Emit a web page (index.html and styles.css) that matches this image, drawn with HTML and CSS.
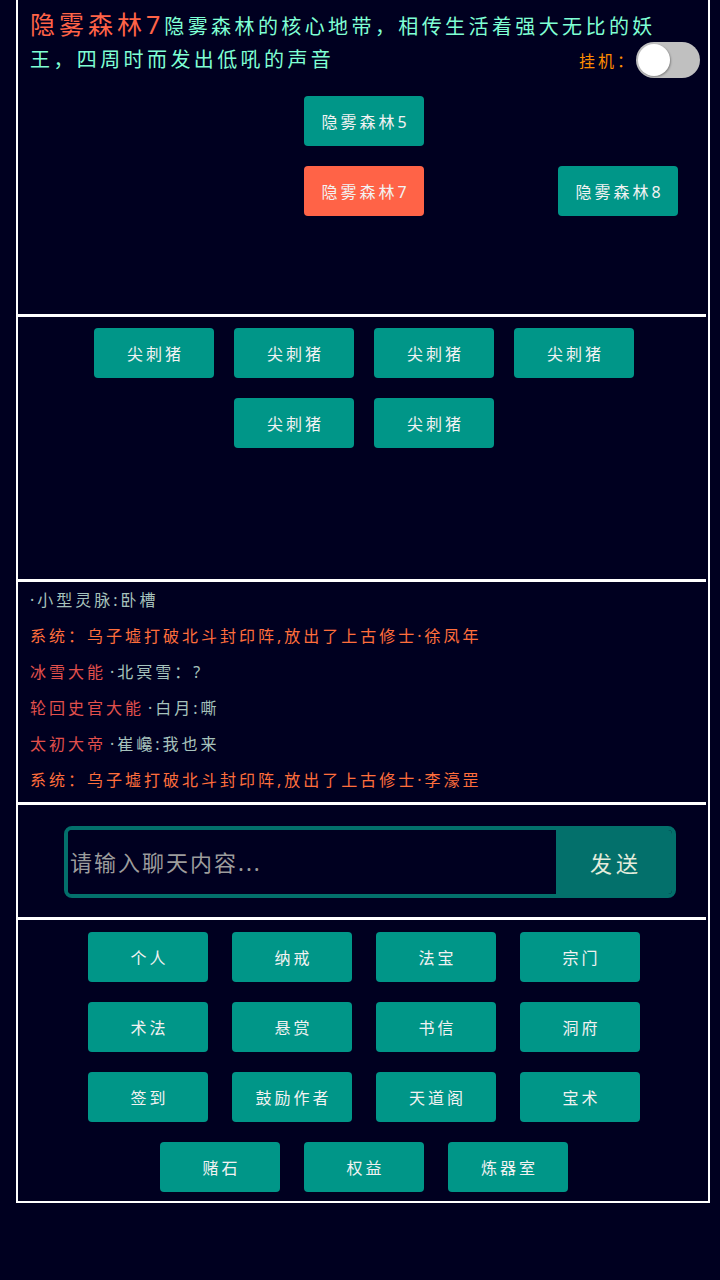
FILE: index.html
```html
<!DOCTYPE html>
<html lang="zh-CN">
<head>
    <meta charset="UTF-8">
    <meta name="viewport" content="width=device-width, initial-scale=1.0">
    <title>隐雾森林7</title>
    <link rel="stylesheet" href="styles.css">
</head>
<body>
    <div class="game">
        <section class="panel scene">
            <div class="scene-title"><span class="scene-name">隐雾森林7</span><span class="scene-desc">隐雾森林的核心地带，相传生活着强大无比的妖王，四周时而发出低吼的声音</span></div>
            <div class="idle">
                <span class="idle-label">挂机：</span>
                <label class="switch">
                    <input type="checkbox">
                    <span class="knob"></span>
                </label>
            </div>
            <div class="map">
                <button class="btn room" style="grid-area: 1 / 2">隐雾森林5</button>
                <button class="btn room current" style="grid-area: 2 / 2">隐雾森林7</button>
                <button class="btn room" style="grid-area: 2 / 3">隐雾森林8</button>
            </div>
        </section>

        <section class="panel monsters">
            <div class="btn-list monster-list">
                <button class="btn">尖刺猪</button>
                <button class="btn">尖刺猪</button>
                <button class="btn">尖刺猪</button>
                <button class="btn">尖刺猪</button>
                <button class="btn">尖刺猪</button>
                <button class="btn">尖刺猪</button>
            </div>
        </section>

        <section class="panel chat">
            <div class="msg"><span class="msg-name"></span><span class="msg-text">·小型灵脉:卧槽</span></div>
            <div class="msg system">系统：乌子墟打破北斗封印阵,放出了上古修士·徐凤年</div>
            <div class="msg"><span class="msg-name">冰雪大能</span><span class="msg-text">·北冥雪：?</span></div>
            <div class="msg"><span class="msg-name">轮回史官大能</span><span class="msg-text">·白月:嘶</span></div>
            <div class="msg"><span class="msg-name">太初大帝</span><span class="msg-text">·崔巉:我也来</span></div>
            <div class="msg system">系统：乌子墟打破北斗封印阵,放出了上古修士·李濠罡</div>
        </section>

        <section class="panel send-panel">
            <div class="send-box">
                <input class="send-input" type="text" placeholder="请输入聊天内容...">
                <button class="send-button">发送</button>
            </div>
        </section>

        <section class="panel menu">
            <div class="btn-list menu-list">
                <button class="btn">个人</button>
                <button class="btn">纳戒</button>
                <button class="btn">法宝</button>
                <button class="btn">宗门</button>
                <button class="btn">术法</button>
                <button class="btn">悬赏</button>
                <button class="btn">书信</button>
                <button class="btn">洞府</button>
                <button class="btn">签到</button>
                <button class="btn">鼓励作者</button>
                <button class="btn">天道阁</button>
                <button class="btn">宝术</button>
                <button class="btn">赌石</button>
                <button class="btn">权益</button>
                <button class="btn">炼器室</button>
            </div>
        </section>
    </div>
</body>
</html>
```

FILE: styles.css
```css
body {
    margin: 0;
    background-color: #000020;
    font-family: "Noto Sans", "Noto Sans CJK SC", sans-serif;
}
.game {
    margin-left: 16px;
    width: 694px;
    box-sizing: border-box;
    border-left: 2px solid #fff;
    border-right: 2px solid #fff;
    border-bottom: 2px solid #fff;
}
.panel {
    border-bottom: 3px solid #fff;
    margin-right: 2px;
    box-sizing: border-box;
}
.panel:last-child {
    border-bottom: none;
}

/* scene */
.scene {
    position: relative;
    height: 317px;
    padding: 8px 0 0 12px;
}
.scene-title {
    width: 636px;
    font-size: 20px;
    line-height: 33px;
}
.scene-name {
    font-size: 25px;
    letter-spacing: 4px;
    color: #ff6347;
}
.scene-desc {
    letter-spacing: 3.4px;
    color: #7fffd4;
}
.idle {
    position: absolute;
    top: 42px;
    right: 6px;
    display: flex;
    align-items: center;
}
.idle-label {
    font-family: "Noto Sans CJK SC", sans-serif;
    font-size: 16px;
    letter-spacing: 3px;
    color: #ff8c00;
}
.switch {
    position: relative;
    display: block;
    width: 64px;
    height: 36px;
}
.switch input {
    display: none;
}
.knob {
    position: absolute;
    inset: 0;
    border-radius: 18px;
    background-color: #c0c0c0;
    cursor: pointer;
}
.knob::before {
    content: "";
    position: absolute;
    left: 2px;
    top: 2px;
    width: 32px;
    height: 32px;
    border-radius: 50%;
    background-color: #fff;
    box-shadow: 1px 1px 2px rgba(0, 0, 0, 0.3);
}
.switch input:checked + .knob {
    background-color: #009688;
}
.switch input:checked + .knob::before {
    left: 30px;
}
.map {
    display: grid;
    grid-template-columns: repeat(3, 120px);
    grid-auto-rows: 50px;
    gap: 20px 134px;
    justify-content: center;
    margin: 20px 0 0 -8px;
}

/* buttons */
.btn {
    width: 120px;
    height: 50px;
    padding: 0 0 0 3px;
    border: none;
    border-radius: 4px;
    background-color: #009688;
    color: #f2f2f2;
    font-family: "Noto Sans", "Noto Sans CJK SC", sans-serif;
    font-size: 16px;
    letter-spacing: 3px;
    cursor: pointer;
}
.btn.current {
    background-color: #ff6347;
}
.btn-list {
    display: flex;
    flex-wrap: wrap;
    justify-content: center;
    margin: 0 auto;
}

/* monsters */
.monsters {
    height: 265px;
    padding: 11px 0 0 4px;
}
.monster-list {
    max-width: 540px;
    gap: 20px;
}

/* chat */
.chat {
    height: 223px;
    padding-left: 12px;
}
.msg {
    font-size: 16px;
    line-height: 36px;
    letter-spacing: 3px;
    white-space: nowrap;
}
.msg-name {
    color: #e2504c;
}
.msg-name:not(:empty) {
    margin-right: 4px;
}
.msg-text {
    color: #a6c2bc;
}
.msg.system {
    color: #ff6e3c;
}

/* send */
.send-panel {
    height: 115px;
    padding-top: 21px;
}
.send-box {
    display: flex;
    margin-left: 46px;
    width: 612px;
    height: 72px;
    box-sizing: border-box;
    border: 4px solid #03706b;
    border-radius: 8px;
    overflow: hidden;
}
.send-input {
    flex: 1;
    min-width: 0;
    padding: 0 0 0 2px;
    border: none;
    outline: none;
    background-color: #000020;
    color: #ddd;
    font-family: "Noto Sans", "Noto Sans CJK SC", sans-serif;
    font-size: 22px;
    letter-spacing: 2px;
}
.send-input::placeholder {
    color: #9c9c9c;
}
.send-button {
    width: 116px;
    border: none;
    background-color: #03706b;
    color: #e4ecdc;
    font-family: "Noto Sans CJK SC", sans-serif;
    font-size: 22px;
    letter-spacing: 4px;
    padding: 0 0 0 4px;
    cursor: pointer;
}

/* menu */
.menu {
    height: 281px;
    padding: 12px 0 0 4px;
}
.menu-list {
    max-width: 552px;
    gap: 20px 24px;
}
```
